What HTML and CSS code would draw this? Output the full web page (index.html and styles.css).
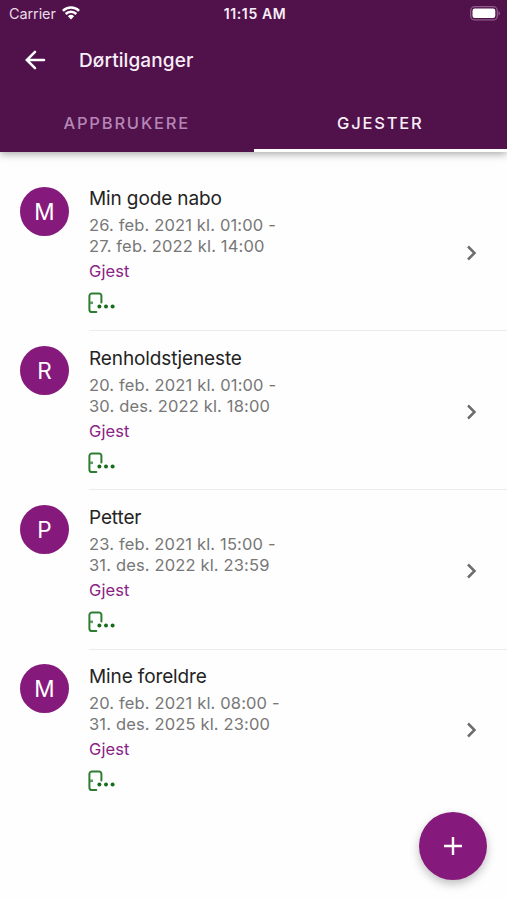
FILE: index.html
```html
<!DOCTYPE html>
<html lang="no">
<head>
    <meta charset="UTF-8">
    <meta name="viewport" content="width=device-width, initial-scale=1.0">
    <title>Dørtilganger</title>
    <link rel="stylesheet" href="styles.css">
</head>
<body>

    <!-- Shared icons -->
    <svg class="sprite" aria-hidden="true">
        <symbol id="icon-door" viewBox="0 0 28 22">
            <path d="M8.300 20H4a2.600 2.600 0 0 1-2.600-2.600V4A2.600 2.600 0 0 1 4 1.400h7A2.400 2.400 0 0 1 13.400 3.800V10.500" fill="none" stroke="#2f7d32" stroke-width="2" stroke-linecap="round"/>
            <path d="M2 10.800h3" fill="none" stroke="#5c9c66" stroke-width="2.600"/>
            <circle cx="11.400" cy="14.600" r="2" fill="#176b1d"/>
            <circle cx="18" cy="14.600" r="2" fill="#176b1d"/>
            <circle cx="24.600" cy="14.600" r="2" fill="#176b1d"/>
        </symbol>
        <symbol id="icon-chevron" viewBox="0 0 12 16">
            <path d="M2 1.500L8.500 8L2 14.500" fill="none" stroke="#6d6d6d" stroke-width="2.500"/>
        </symbol>
    </svg>

    <header class="header">
        <div class="status-bar">
            <div class="carrier">
                <span>Carrier</span>
                <svg class="wifi" viewBox="0 0 18 14">
                    <path d="M0.900 4.900a11.500 11.500 0 0 1 16.200 0M3.700 8a7.500 7.500 0 0 1 10.600 0" fill="none" stroke="#fff" stroke-width="2.500"/>
                    <path d="M5.900 10.200a4.500 4.500 0 0 1 6.200 0L9 13.400z" fill="#fff"/>
                </svg>
            </div>
            <span class="clock">11:15 AM</span>
            <svg class="battery" viewBox="0 0 31 15">
                <rect x="0.700" y="0.700" width="26.600" height="13.200" rx="4" fill="none" stroke="#8d5c89" stroke-width="1.300"/>
                <rect x="2.500" y="2.600" width="22.800" height="9.400" rx="2.200" fill="#fff"/>
                <path d="M28.500 5v4.600a2.500 2.500 0 0 0 0-4.600z" fill="#8d5c89"/>
            </svg>
        </div>
        <div class="title-bar">
            <svg class="back" viewBox="0 0 22 20">
                <path d="M10 1.800L1.800 10l8.200 8.200M2 10H19" fill="none" stroke="#fff" stroke-width="2.500" stroke-linecap="round"/>
            </svg>
            <h1>Dørtilganger</h1>
        </div>
        <nav class="tabs">
            <a class="tab">APPBRUKERE</a>
            <a class="tab active">GJESTER</a>
        </nav>
    </header>

    <!-- Guest list -->
    <main class="guest-list">
        <div class="guest">
            <div class="avatar">M</div>
            <div class="details">
                <div class="info">
                    <h2>Min gode nabo</h2>
                    <p class="period">26. feb. 2021 kl. 01:00 -<br>27. feb. 2022 kl. 14:00</p>
                    <p class="role">Gjest</p>
                    <svg class="door"><use href="#icon-door"/></svg>
                </div>
                <svg class="chevron"><use href="#icon-chevron"/></svg>
            </div>
        </div>
        <div class="guest">
            <div class="avatar">R</div>
            <div class="details">
                <div class="info">
                    <h2>Renholdstjeneste</h2>
                    <p class="period">20. feb. 2021 kl. 01:00 -<br>30. des. 2022 kl. 18:00</p>
                    <p class="role">Gjest</p>
                    <svg class="door"><use href="#icon-door"/></svg>
                </div>
                <svg class="chevron"><use href="#icon-chevron"/></svg>
            </div>
        </div>
        <div class="guest">
            <div class="avatar">P</div>
            <div class="details">
                <div class="info">
                    <h2>Petter</h2>
                    <p class="period">23. feb. 2021 kl. 15:00 -<br>31. des. 2022 kl. 23:59</p>
                    <p class="role">Gjest</p>
                    <svg class="door"><use href="#icon-door"/></svg>
                </div>
                <svg class="chevron"><use href="#icon-chevron"/></svg>
            </div>
        </div>
        <div class="guest">
            <div class="avatar">M</div>
            <div class="details">
                <div class="info">
                    <h2>Mine foreldre</h2>
                    <p class="period">20. feb. 2021 kl. 08:00 -<br>31. des. 2025 kl. 23:00</p>
                    <p class="role">Gjest</p>
                    <svg class="door"><use href="#icon-door"/></svg>
                </div>
                <svg class="chevron"><use href="#icon-chevron"/></svg>
            </div>
        </div>
    </main>

    <button class="add-button" aria-label="Legg til">
        <svg viewBox="0 0 18 18">
            <path d="M9 0v18M0 9h18" stroke="#fff" stroke-width="2.400"/>
        </svg>
    </button>

</body>
</html>
```
FILE: styles.css
```css
/* General Page Styles */
* {
    box-sizing: border-box;
}

body {
    margin: 0;
    height: 900px;
    overflow: hidden;
    background: #fefefe;
    color: #242424;
    font-family: Inter, "Liberation Sans", sans-serif;
}

h1, h2, p {
    margin: 0;
    font-weight: 400;
}

.sprite {
    display: none;
}

/* Header */
.header {
    height: 152px;
    background: #51114b;
    color: #f8eef8;
    box-shadow: 0 2px 8px rgba(0, 0, 0, 0.35);
}

.status-bar {
    display: grid;
    grid-template-columns: 1fr auto 1fr;
    align-items: center;
    height: 27px;
    padding: 0 6px 0 9px;
    font-size: 14.5px;
}

.carrier {
    display: flex;
    align-items: center;
    gap: 6px;
    color: #e9dbe8;
}

.carrier span {
    letter-spacing: -0.1px;
}

.wifi {
    width: 18px;
    height: 14px;
    margin-top: -2px;
}

.clock {
    font-size: 14px;
    font-weight: 600;
    letter-spacing: 0.6px;
}

.battery {
    justify-self: end;
    width: 31px;
    height: 15px;
}

.title-bar {
    display: flex;
    align-items: center;
    height: 66px;
    padding-left: 25px;
}

.back {
    width: 22px;
    height: 20px;
    margin-right: 32px;
}

.title-bar h1 {
    font-size: 19px;
    font-weight: 500;
    letter-spacing: 0.1px;
}

.tabs {
    display: flex;
    height: 59px;
}

.tab {
    flex: 1;
    display: flex;
    align-items: center;
    justify-content: center;
    padding-top: 3px;
    font-size: 16.5px;
    font-weight: 500;
    letter-spacing: 1.8px;
    color: #b587b6;
    border-bottom: 3px solid transparent;
}

.tab.active {
    color: #f8eef8;
    border-bottom-color: #fff;
}

/* Guest List */
.guest-list {
    padding-top: 20px;
}

.guest {
    display: flex;
    height: 159.2px;
    padding-left: 20px;
}

.avatar {
    display: flex;
    align-items: center;
    justify-content: center;
    width: 49px;
    height: 49px;
    margin: 14.500px 20px 0 0;
    border-radius: 50%;
    background: #861a7c;
    color: #fff;
    font-size: 22.500px;
}

.details {
    flex: 1;
    display: flex;
    align-items: center;
    justify-content: space-between;
    padding-right: 29px;
    border-bottom: 1px solid #ececec;
}

.guest:last-child .details {
    border-bottom-color: transparent;
}

.info {
    align-self: flex-start;
    padding-top: 14.4px;
}

.info h2 {
    font-size: 19px;
    line-height: 26px;
    letter-spacing: -0.12px;
}

.period {
    padding-top: 3px;
    font-size: 16.5px;
    line-height: 21px;
    letter-spacing: 0.15px;
    color: #777;
}

.role {
    padding-top: 3px;
    font-size: 16.5px;
    line-height: 22px;
    letter-spacing: 0.1px;
    color: #8a2385;
}

.door {
    display: block;
    width: 28px;
    height: 22px;
    margin: 10px 0 0 -1px;
}

.chevron {
    width: 12px;
    height: 16px;
    margin-top: 3px;
}

/* Floating Button */
.add-button {
    position: absolute;
    right: 20px;
    bottom: 20px;
    display: flex;
    align-items: center;
    justify-content: center;
    width: 68px;
    height: 68px;
    padding: 0;
    border: none;
    border-radius: 50%;
    background: #861a7c;
    box-shadow: 0 4px 10px rgba(0, 0, 0, 0.25);
}

.add-button svg {
    width: 18px;
    height: 18px;
}
```
